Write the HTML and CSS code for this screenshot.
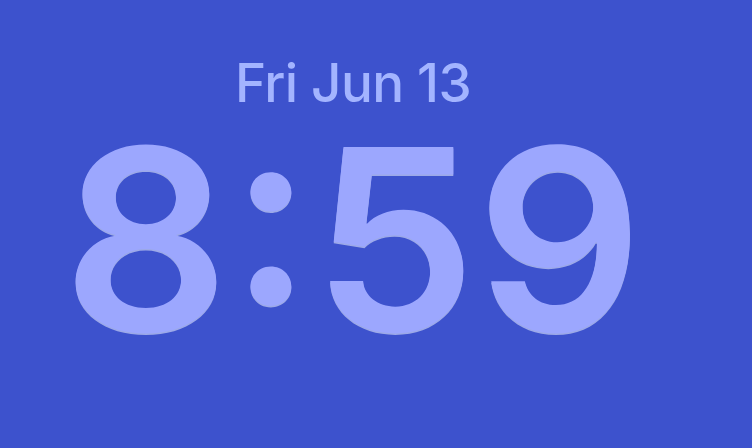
FILE: index.html
```html
<!DOCTYPE html>
<html>
<head>
<meta charset="utf-8">
<link rel="stylesheet" href="styles.css">
</head>
<body>
<main class="lock">
  <div class="date">Fri Jun 13</div>
  <div class="time">8:59</div>
</main>
</body>
</html>
```
FILE: styles.css
```css
html, body {
  margin: 0;
  padding: 0;
  background: #3d52cd;
}
.lock {
  width: 752px;
  height: 448px;
  box-sizing: border-box;
  padding: 51px 46px 0 0;
  display: flex;
  flex-direction: column;
  align-items: center;
  font-family: Inter, "Noto Sans", sans-serif;
  overflow: hidden;
}
.date {
  font-size: 53px;
  font-weight: 500;
  line-height: 64px;
  color: #a3b4ff;
  letter-spacing: -0.6px;
}
.time {
  font-size: 253px;
  font-weight: 600;
  line-height: 200px;
  color: #9ca7fe;
  letter-spacing: 0;
  margin-top: 24px;
  transform: scaleX(1.03);
  text-shadow: 0 1.5px 0 rgba(235, 240, 255, 0.55);
}
```
